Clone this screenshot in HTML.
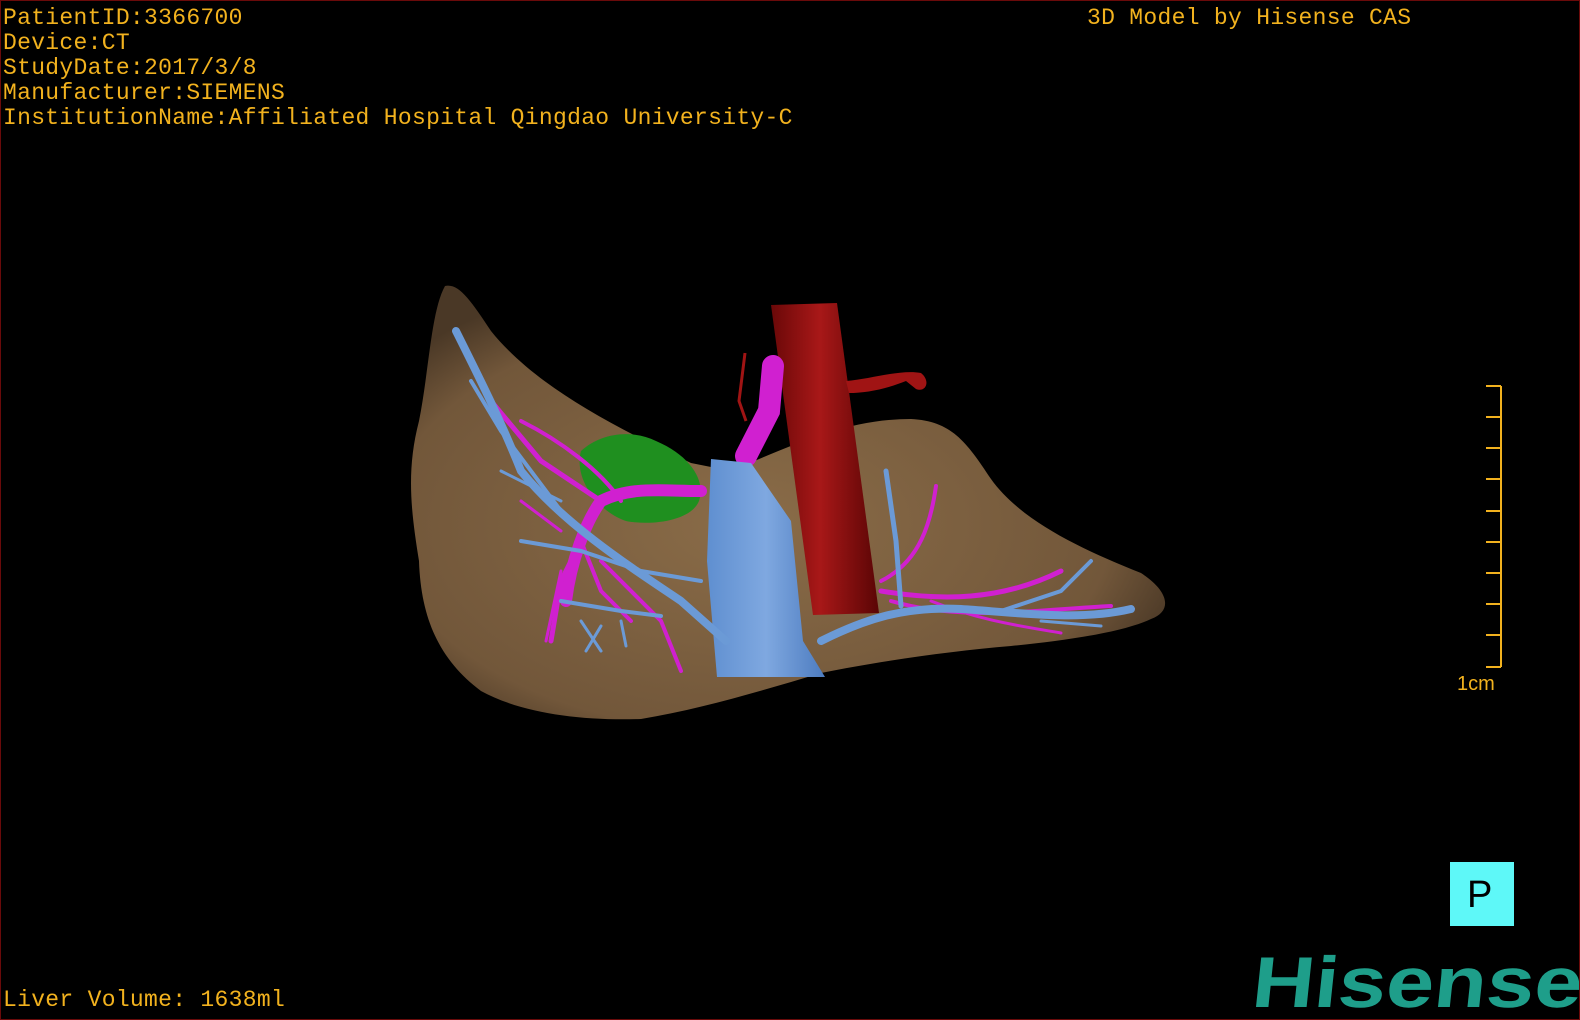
<!DOCTYPE html>
<html><head><meta charset="utf-8"><style>
html,body{margin:0;padding:0;background:#000;}
#c{position:relative;width:1578px;height:1018px;border:1px solid #6a0a0a;overflow:hidden;background:#000;}
.t{position:absolute;left:2px;font-family:"Liberation Mono",monospace;font-size:23px;line-height:25px;color:#f2b21e;white-space:pre;letter-spacing:0.3px;}
svg{position:absolute;left:0;top:0}
</style></head><body><div id="c">
<svg width="1580" height="1020" viewBox="0 0 1580 1020">
<defs>
<radialGradient id="lg" cx="0.45" cy="0.55" r="0.6"><stop offset="0" stop-color="#8a6c48"/><stop offset="0.8" stop-color="#72573a"/><stop offset="1" stop-color="#4a3826"/></radialGradient>
<linearGradient id="ag" x1="0" x2="1"><stop offset="0" stop-color="#6a0808"/><stop offset="0.45" stop-color="#a81818"/><stop offset="1" stop-color="#5a0505"/></linearGradient>
<linearGradient id="bg" x1="0" x2="1"><stop offset="0" stop-color="#5f8fd0"/><stop offset="0.5" stop-color="#7fa8e0"/><stop offset="1" stop-color="#4d7cc0"/></linearGradient>
</defs>
<path d="M444,285 C458,282 470,300 490,330 C530,380 600,420 690,462 L730,470 C800,440 850,418 910,418 C950,420 965,440 990,478 C1020,520 1080,548 1140,572 C1168,590 1172,610 1150,618 C1120,632 1060,640 1010,645 C950,650 880,660 820,672 C760,690 700,708 640,718 C580,720 520,712 480,690 C440,660 420,620 418,560 C410,510 405,470 418,420 C428,370 430,310 444,285 Z" fill="url(#lg)"/>
<path d="M580,450 C600,432 630,428 655,440 C690,455 705,480 698,500 C690,520 650,525 625,520 C600,512 572,480 580,450 Z" fill="#1f8f1f"/>
<path d="M770,304 L836,302 L878,612 L812,614 Z" fill="url(#ag)"/>
<path d="M845,380 C870,378 900,368 920,372 C930,380 925,392 915,388 L905,380 C885,388 865,392 848,392 Z" fill="#a01414"/>
<path d="M744,352 L738,400 L745,420" stroke="#a01414" stroke-width="3" fill="none"/>
<g stroke="#d020d0" fill="none" stroke-linecap="round">
<path d="M772,365 L768,410 L745,455" stroke-width="22"/>
<path d="M700,490 C660,490 630,485 600,500 C585,520 570,560 565,600" stroke-width="12"/>
<path d="M600,500 L540,460 L490,400 L470,360" stroke-width="5"/>
<path d="M620,500 C600,470 560,440 520,420" stroke-width="4"/>
<path d="M590,520 L560,580 L550,640" stroke-width="5"/>
<path d="M580,540 L600,590 L630,620" stroke-width="4"/>
<path d="M600,560 L660,620 L680,670" stroke-width="4"/>
<path d="M520,500 L560,530" stroke-width="3"/>
<path d="M560,570 L545,640" stroke-width="3"/>
<path d="M880,590 C940,600 1000,600 1060,570" stroke-width="5"/>
<path d="M880,580 C920,560 930,520 935,485" stroke-width="4"/>
<path d="M890,600 C960,620 1020,610 1110,605" stroke-width="4"/>
<path d="M930,600 C980,620 1020,625 1060,632" stroke-width="3"/>
</g>
<path d="M710,458 L750,462 L790,520 L802,640 L824,676 L716,676 L706,560 Z" fill="url(#bg)"/>
<g stroke="#6b9ad6" fill="none" stroke-linecap="round">
<path d="M455,330 C480,380 500,420 520,470 C560,520 620,560 680,600 L725,640" stroke-width="8"/>
<path d="M470,380 L500,430 L560,510" stroke-width="4"/>
<path d="M500,470 L560,500" stroke-width="3"/>
<path d="M520,540 L580,550 L640,570 L700,580" stroke-width="4"/>
<path d="M560,600 L620,610 L660,615" stroke-width="4"/>
<path d="M580,620 L600,650" stroke-width="3"/>
<path d="M600,625 L585,650 M620,620 L625,645" stroke-width="3"/>
<path d="M820,640 C860,620 900,605 960,608 C1020,612 1080,620 1130,608" stroke-width="8"/>
<path d="M900,605 L895,540 L885,470" stroke-width="5"/>
<path d="M1000,610 L1060,590 L1090,560" stroke-width="4"/>
<path d="M1040,620 L1100,625" stroke-width="3"/>
</g>
<g stroke="#f2b21e" stroke-width="2" fill="none">
<path d="M1500,385 L1500,666"/>
<path d="M1485,385H1500M1485,416H1500M1485,447H1500M1485,478H1500M1485,510H1500M1485,541H1500M1485,572H1500M1485,603H1500M1485,634H1500M1485,666H1500"/>
</g>
<text x="1456" y="689" fill="#f2b21e" font-family="Liberation Sans, sans-serif" font-size="20">1cm</text>
<rect x="1449" y="861" width="64" height="64" fill="#5ef8f8"/>
<text x="1466" y="906" fill="#000" font-family="Liberation Sans, sans-serif" font-size="38">P</text>
<text x="1250" y="1006" fill="#1e9e8a" font-family="Liberation Sans, sans-serif" font-weight="bold" font-size="72" textLength="330" lengthAdjust="spacingAndGlyphs" transform="skewX(-6) translate(105,0)">Hisense</text>
</svg>
<div class="t" style="top:5px">PatientID:3366700
Device:CT
StudyDate:2017/3/8
Manufacturer:SIEMENS
InstitutionName:Affiliated Hospital Qingdao University-C</div>
<div class="t" style="top:5px;left:1086px">3D Model by Hisense CAS</div>
<div class="t" style="top:987px">Liver Volume: 1638ml</div>
</div></body></html>
